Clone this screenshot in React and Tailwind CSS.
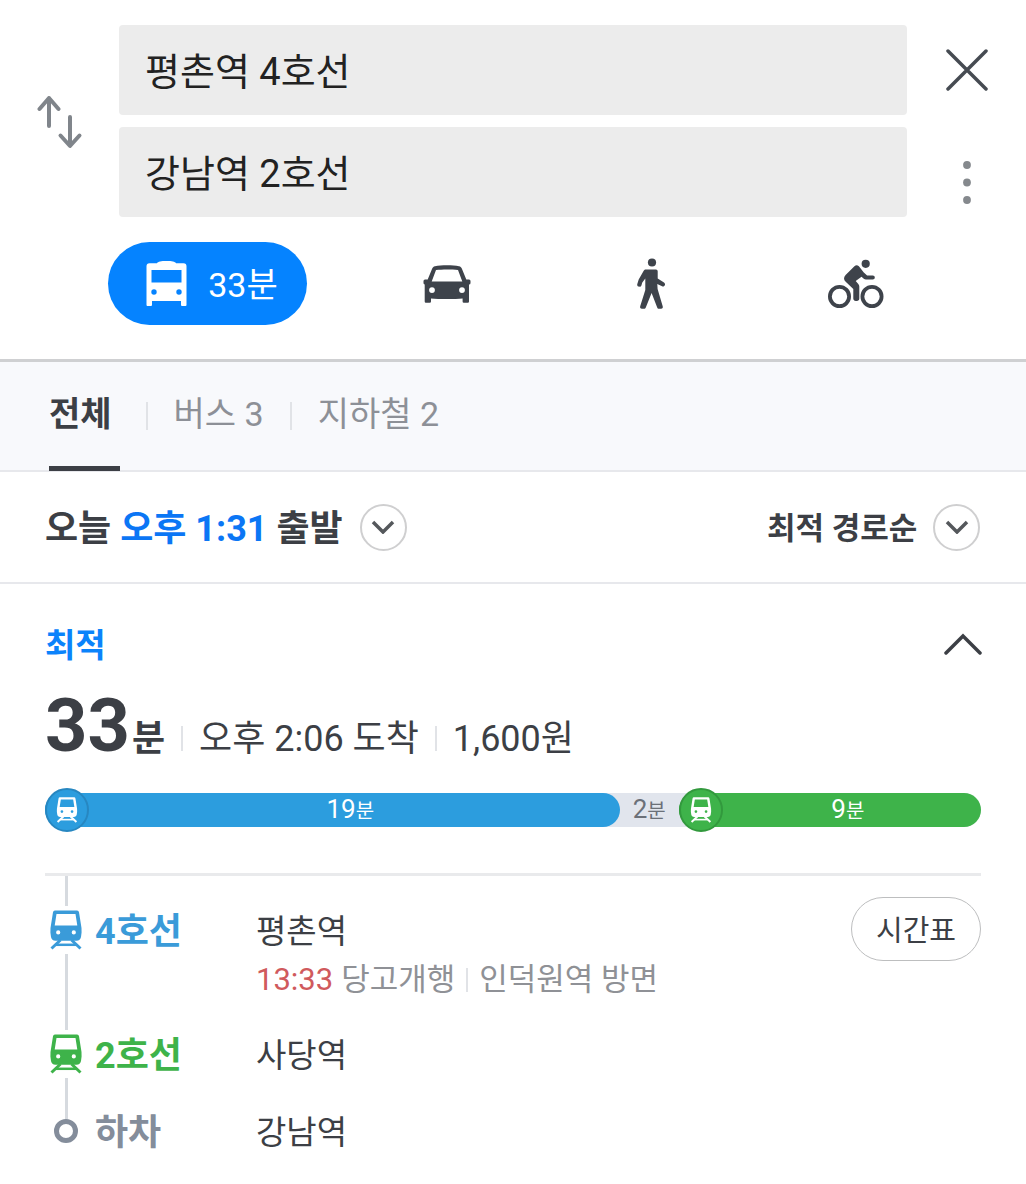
import React, { useState } from 'react';
import clsx from 'clsx';

const MODES = [
  { id: 'car',  label: '자동차', Icon: CarIcon  },
  { id: 'walk', label: '도보',   Icon: WalkIcon },
  { id: 'bike', label: '자전거', Icon: BikeIcon },
];

const TABS = [
  { id: 'all',    label: '전체' },
  { id: 'bus',    label: '버스 3' },
  { id: 'subway', label: '지하철 2' },
];

// share is the part of the whole bar that a segment takes
const SEGMENTS = [
  { minutes: 19, share: 574, train: true,  bar: 'bg-[#2c9dde] text-white', dot: 'bg-[#2c9dde] border-[#2787c1]' },
  { minutes: 2,  share: 59,  train: false, bar: 'text-[#6b7078]' },
  { minutes: 9,  share: 302, train: true,  bar: 'bg-[#3eb34a] text-white', dot: 'bg-[#3eb34a] border-[#32993d]' },
];

function SwapIcon() {
  return (
    <svg width="46" height="56" viewBox="0 0 46 56" fill="none" stroke="#80858b" strokeWidth="4" strokeLinecap="round" strokeLinejoin="round">
      <path d="M12 33V5M2.500 16 12 5 21.500 16" />
      <path d="M33 24v28M23.500 42.500 33 53 42.500 42.500" />
    </svg>
  );
}

function CloseIcon() {
  return (
    <svg width="42" height="42" viewBox="0 0 42 42" fill="none" stroke="#464b52" strokeWidth="3.500" strokeLinecap="round">
      <path d="M2 2 40 40M40 2 2 40" />
    </svg>
  );
}

function MoreIcon() {
  return (
    <svg width="10" height="44" viewBox="0 0 10 44" fill="#85898d">
      <circle cx="5" cy="5" r="3.900" />
      <circle cx="5" cy="22.500" r="3.900" />
      <circle cx="5" cy="40" r="3.900" />
    </svg>
  );
}

function BusIcon() {
  return (
    <svg width="41" height="46" viewBox="0 0 41 46" fill="white">
      <path
        fillRule="evenodd"
        d="M11 2.200C12 .5 15 0 20.500 0S29 .5 30 2.200h7.500a3 3 0 0 1 3 3V44a1 1 0 0 1-1 1h-3.500a1 1 0 0 1-1-1v-4H6v4a1 1 0 0 1-1 1H1.500a1 1 0 0 1-1-1V5.200a3 3 0 0 1 3-3ZM5.500 9v12.500h30V9ZM8 28.300a2.700 2.700 0 1 0 0 5.400 2.700 2.700 0 0 0 0-5.400Zm25 0a2.700 2.700 0 1 0 0 5.400 2.700 2.700 0 0 0 0-5.400Z"
      />
    </svg>
  );
}

function CarIcon() {
  return (
    <svg width="48" height="38" viewBox="0 0 48 38" fill="#3e434b">
      <path
        fillRule="evenodd"
        d="M12 1.300C18 0 30 0 36 1.300c1.500.3 2.500 1.400 3 2.700l4.300 10.500H46a1.500 1.500 0 0 1 1.500 1.500v2a1.500 1.500 0 0 1-1.500 1.500V36.500a1.200 1.200 0 0 1-1.200 1.200h-4a1.200 1.200 0 0 1-1.200-1.200V33.500C32 34.200 16 34.200 8 33.500v3a1.200 1.200 0 0 1-1.200 1.200H2.900a1.200 1.200 0 0 1-1.200-1.200V19.500A1.500 1.500 0 0 1 .5 18v-2A1.500 1.500 0 0 1 2 14.500h2.700L9 4c.5-1.300 1.500-2.400 3-2.700ZM13 5 8.700 16.500h30.600L35 5C29 4.200 19 4.200 13 5ZM9 22.200a2.900 2.900 0 1 0 0 5.800 2.900 2.900 0 0 0 0-5.800Zm30 0a2.900 2.900 0 1 0 0 5.800 2.900 2.900 0 0 0 0-5.800Z"
      />
    </svg>
  );
}

function WalkIcon() {
  return (
    <svg width="28" height="51" viewBox="0 0 28 51" fill="#3e434b">
      <circle cx="15" cy="4.500" r="4.100" />
      <path d="M9 11.500h10a1.700 1.700 0 0 1 1.700 1.700V20.500l6.300 4c1 .7 1.300 1.700.8 2.700-.5 1.100-1.700 1.600-2.700 1.100L20.300 26l.3 5 5.100 17.300c.4 1.400-.2 2.400-1.500 2.400h-2.300c-.9 0-1.500-.5-1.700-1.300L14.600 35 8.800 49.400c-.3.800-.9 1.300-1.800 1.300H4.800c-1.400 0-2-1-1.600-2.400L8.300 32V20.500l-3 4-.9 2.900c-.4 1.200-1.500 1.600-2.600 1.200C.5 28.200 0 27.200.3 26l1.400-4.600L6.700 12.800c.5-.9 1.200-1.300 2.300-1.300Z" />
    </svg>
  );
}

function BikeIcon() {
  return (
    <svg width="56" height="50" viewBox="0 0 56 50" fill="#3e434b">
      <g fill="none" stroke="#3e434b" strokeWidth="3.800">
        <circle cx="11.500" cy="37.500" r="9.600" />
        <circle cx="44" cy="37.500" r="9.600" />
      </g>
      <circle cx="37.700" cy="4.800" r="4.100" />
      <path d="M26.700 6.900c1.300-1.100 3-.9 4.200.4l4.900 6.300 3.300 2.900h5.600c1.300 0 2.100.8 2.100 2s-.8 2-2.100 2h-6.800c-.8 0-1.500-.2-2.100-.8L33.500 17.800l-5.800 4.200 2.600 3c.7.700 1 1.500 1 2.600v11.900c0 1.600-1 2.500-2.500 2.500h-1c-1.500 0-2.500-.9-2.500-2.500V30l-7.600-7.200c-2.200-2.100-2.200-4.600-.1-6.900Z" />
    </svg>
  );
}

function TrainIcon({ className }) {
  return (
    <svg className={className} viewBox="0 0 32 40" fill="currentColor">
      <path
        fillRule="evenodd"
        d="M5 .5h22a2 2 0 0 1 2 1.700L31.500 18c.3 3 .1 6-.5 9-.4 2.300-2 3.800-4.500 3.800h-21C3 30.800 1.400 29.300 1 27c-.6-3-.8-6-.5-9L3 2.200A2 2 0 0 1 5 .5ZM6.500 4 4.700 15.500h22.600L25.500 4ZM8.200 20.300a2.100 2.100 0 1 0 0 4.200 2.100 2.100 0 0 0 0-4.200Zm15.600 0a2.100 2.100 0 1 0 0 4.200 2.100 2.100 0 0 0 0-4.200Z"
      />
      <path d="M10.500 30 1.500 38.500M21.500 30l9 8.500" fill="none" stroke="currentColor" strokeWidth="3" />
      <path d="M6 34.800h20" fill="none" stroke="currentColor" strokeWidth="2.500" />
    </svg>
  );
}

function ChevronCircle() {
  return (
    <span className="w-[47px] h-[47px] shrink-0 rounded-full border-2 border-[#cfcfd0] flex items-center justify-center pointer-events-none">
      <svg width="24" height="14" viewBox="0 0 24 14" fill="none" stroke="#55585c" strokeWidth="3.500">
        <path d="M2 2 12 12 22 2" />
      </svg>
    </span>
  );
}

function Divider({ className }) {
  return <span className={clsx('shrink-0 bg-[#e1e3e7]', className)} />;
}

function RouteBar() {
  return (
    <div className="mt-[13px] h-11 flex items-center">
      <div className="w-full h-[34px] flex rounded-full bg-[#e1e5ed]">
        {SEGMENTS.map((s, i) => (
          <div
            key={i}
            className={clsx('relative flex items-center justify-center rounded-full min-w-0', s.bar)}
            style={{ flexGrow: s.share, flexBasis: 0 }}
          >
            {s.train && (
              <span className={clsx('absolute left-0 -top-[5px] size-11 rounded-full border-2 flex items-center justify-center', s.dot)}>
                <TrainIcon className="w-[22px] h-[26px]" />
              </span>
            )}
            <span className={clsx('text-[26px] leading-[34px] whitespace-nowrap', s.train && 'pl-9')}>
              {s.minutes}<span className="text-[20px]">분</span>
            </span>
          </div>
        ))}
      </div>
    </div>
  );
}

export default function App() {
  const [from, setFrom] = useState('평촌역 4호선');
  const [to, setTo] = useState('강남역 2호선');
  const [tab, setTab] = useState('all');

  const field = 'w-full h-[90px] px-[26px] pb-1 rounded bg-[#ececec] text-[38px] text-[#222222] outline-none';

  return (
    <div className="min-h-screen bg-white text-[#3c3f45] font-['Roboto','Noto_Sans_CJK_KR',sans-serif]">
      {/* Search */}
      <header className="border-b-[3px] border-[#cfd0d2]">
        <div className="flex pt-[25px]">
          <div className="w-[119px] shrink-0 flex items-center justify-center">
            <button aria-label="출발지 도착지 바꾸기"><SwapIcon /></button>
          </div>
          <div className="flex-1 min-w-0 flex flex-col gap-3">
            <input aria-label="출발지" className={field} value={from} onChange={(e) => setFrom(e.target.value)} />
            <input aria-label="도착지" className={field} value={to} onChange={(e) => setTo(e.target.value)} />
          </div>
          <div className="w-[119px] shrink-0 flex flex-col gap-3">
            <button aria-label="닫기" className="h-[90px] flex items-center justify-center"><CloseIcon /></button>
            <button aria-label="더보기" className="h-[90px] pt-5 flex items-center justify-center"><MoreIcon /></button>
          </div>
        </div>

        <div className="mt-[25px] mb-[34px] pl-[108px] pr-[68px] flex items-center">
          <button className="w-[199px] h-[83px] pl-[9px] mr-[38px] rounded-full bg-[#0583ff] text-white text-[34px] leading-10 flex items-center justify-center gap-[21px]">
            <BusIcon />
            <span className="pt-[2px]">33분</span>
          </button>
          {MODES.map(({ id, label, Icon }) => (
            <button key={id} aria-label={label} className="flex-1 h-[83px] flex items-center justify-center">
              <Icon />
            </button>
          ))}
        </div>
      </header>

      {/* Filter tabs */}
      <nav className="h-[110px] px-[49px] flex items-stretch bg-[#f8f9fc] border-b-2 border-[#e7e8ec]">
        {TABS.map((t, i) => (
          <React.Fragment key={t.id}>
            {i > 0 && <Divider className="w-[2px] h-7 mt-10 mx-[26px]" />}
            <button
              onClick={() => setTab(t.id)}
              className={clsx(
                'h-[109px] text-[34px] leading-10 border-b-[5px] whitespace-nowrap',
                tab === t.id ? 'pr-2 font-bold border-[#3c3f45]' : 'text-[#8d9097] border-transparent'
              )}
            >
              {t.label}
            </button>
          </React.Fragment>
        ))}
      </nav>

      {/* Departure time and sort order */}
      <div className="h-[112px] pl-[45px] pr-[46px] flex items-center justify-between border-b-2 border-[#e7e8ec]">
        <button className="flex items-center gap-[17px] text-[36px] leading-10 font-bold">
          <span className="pt-1">오늘 <span className="text-[#0b76f5]">오후 1:31</span> 출발</span>
          <ChevronCircle />
        </button>
        <label className="flex items-center gap-[15px]">
          <select aria-label="정렬" className="appearance-none bg-transparent pt-1 text-[31px] leading-10 font-bold outline-none">
            <option>최적 경로순</option>
            <option>최소 시간순</option>
            <option>최소 도보순</option>
          </select>
          <ChevronCircle />
        </label>
      </div>

      {/* Best route */}
      <section className="px-[45px] pt-[42px]">
        <div className="flex items-center justify-between">
          <h2 className="text-[33px] leading-10 font-bold text-[#0b83fb]">최적</h2>
          <button aria-label="접기" className="-mr-px pb-1">
            <svg width="38" height="22" viewBox="0 0 38 22" fill="none" stroke="#3c3f45" strokeWidth="3.500" strokeLinecap="round">
              <path d="M2 20 19 3 36 20" />
            </svg>
          </button>
        </div>

        <div className="mt-6 flex items-baseline text-[36px] leading-[72px] whitespace-nowrap">
          <strong className="text-[74px]">33</strong>
          <strong className="ml-[2px]">분</strong>
          <Divider className="w-[2px] h-[25px] mx-4" />
          <span>오후 2:06 도착</span>
          <Divider className="w-[2px] h-[25px] mx-4" />
          <span>1,600원</span>
        </div>

        <RouteBar />

        {/* Steps */}
        <ol className="mt-[41px] border-t-[3px] border-[#e9eaec] text-[33px] leading-10">
          <li className="flex">
            <div className="w-[42px] shrink-0 flex flex-col items-center text-[#3a9bd9]">
              <span className="w-[3px] h-[30px] bg-[#d6dadf]" />
              <TrainIcon className="my-1 w-[34px] h-10" />
              <span className="w-[3px] flex-1 bg-[#d6dadf]" />
            </div>
            <strong className="w-[169px] pl-2 pt-9 shrink-0 text-[36px] text-[#3a9bd9]">4호선</strong>
            <div className="flex-1 pt-9 pb-[30px]">
              <p>평촌역</p>
              <p className="mt-2 flex items-center text-[31px] text-[#8f9196] whitespace-nowrap">
                <span className="mr-2 text-[#d05a5d]">13:33</span>
                당고개행
                <Divider className="w-[2px] h-6 mx-[11px]" />
                인덕원역 방면
              </p>
            </div>
            <button className="mt-[21px] pt-[3px] w-[130px] h-16 shrink-0 rounded-full border border-[#bdbebf] text-[29px]">시간표</button>
          </li>
          <li className="flex">
            <div className="w-[42px] shrink-0 flex flex-col items-center text-[#3eb34a]">
              <TrainIcon className="my-1 w-[34px] h-10" />
              <span className="w-[3px] flex-1 bg-[#d6dadf]" />
            </div>
            <strong className="w-[169px] pl-2 pt-[6px] shrink-0 text-[36px] text-[#3eb34a]">2호선</strong>
            <p className="flex-1 pt-[6px] pb-[35px]">사당역</p>
          </li>
          <li className="flex">
            <div className="w-[42px] shrink-0 flex flex-col items-center">
              <span className="w-[3px] h-2 bg-[#d6dadf]" />
              <span className="size-6 rounded-full border-[5px] border-[#848d9b]" />
            </div>
            <strong className="w-[169px] pl-2 pt-[2px] shrink-0 text-[36px] text-[#848d9b]">하차</strong>
            <p className="flex-1 pt-[2px]">강남역</p>
          </li>
        </ol>
      </section>
    </div>
  );
}
